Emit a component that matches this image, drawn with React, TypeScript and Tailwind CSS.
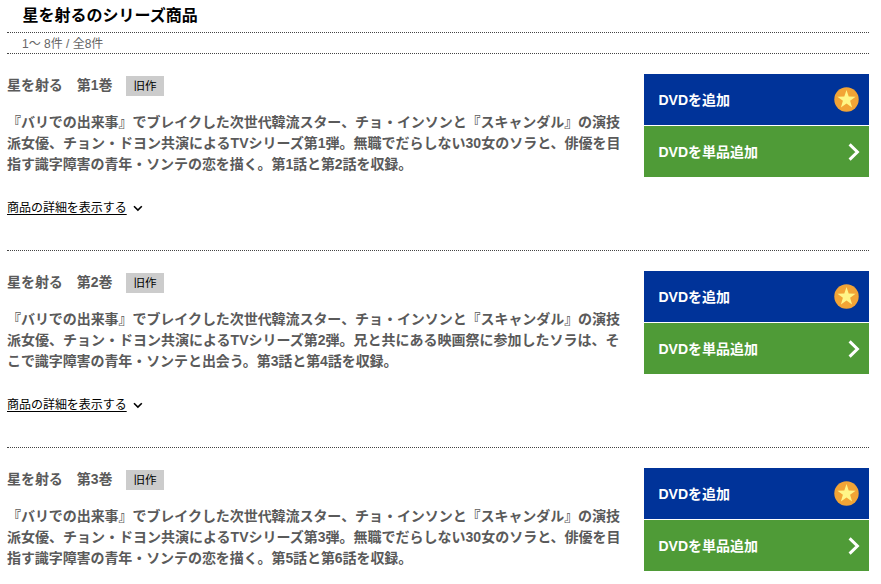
type Volume = {
  id: number;
  title: string;
  lines: string[];
  hasDetails: boolean;
};

const volumes: Volume[] = [
  {
    id: 1,
    title: "星を射る　第1巻",
    lines: [
      "『バリでの出来事』でブレイクした次世代韓流スター、チョ・インソンと『スキャンダル』の演技",
      "派女優、チョン・ドヨン共演によるTVシリーズ第1弾。無職でだらしない30女のソラと、俳優を目",
      "指す識字障害の青年・ソンテの恋を描く。第1話と第2話を収録。",
    ],
    hasDetails: true,
  },
  {
    id: 2,
    title: "星を射る　第2巻",
    lines: [
      "『バリでの出来事』でブレイクした次世代韓流スター、チョ・インソンと『スキャンダル』の演技",
      "派女優、チョン・ドヨン共演によるTVシリーズ第2弾。兄と共にある映画祭に参加したソラは、そ",
      "こで識字障害の青年・ソンテと出会う。第3話と第4話を収録。",
    ],
    hasDetails: true,
  },
  {
    id: 3,
    title: "星を射る　第3巻",
    lines: [
      "『バリでの出来事』でブレイクした次世代韓流スター、チョ・インソンと『スキャンダル』の演技",
      "派女優、チョン・ドヨン共演によるTVシリーズ第3弾。無職でだらしない30女のソラと、俳優を目",
      "指す識字障害の青年・ソンテの恋を描く。第5話と第6話を収録。",
    ],
    hasDetails: false,
  },
];

function StarBadge() {
  return (
    <svg width="25" height="25" viewBox="0 0 25 25">
      <circle cx="12.5" cy="12.5" r="12.2" fill="#f2a436" />
      <path d="M12.5 3.1l2.2 6.5 6.9.1-5.5 4.1 2 6.6-5.6-3.9-5.6 3.9 2-6.6-5.5-4.1 6.9-.1z" fill="#fff587" />
    </svg>
  );
}

function Chevron() {
  return (
    <svg width="12" height="18" viewBox="0 0 12 18" fill="none">
      <path d="M1.6 1.4L9.4 9l-7.8 7.6" stroke="#fff" strokeWidth="3" />
    </svg>
  );
}

function VolumeRow({ volume }: { volume: Volume }) {
  return (
    <li className="flex h-[197px] justify-between border-b border-dotted border-[#444] pt-5">
      <div>
        <div className="flex h-[22px] items-center">
          <h2 className="text-sm font-bold tracking-[-0.05px] text-[#5a5a5a]">{volume.title}</h2>
          <span className="ml-[13.5px] mt-[2px] flex h-5 w-[38px] items-center justify-center bg-[#ccc] pt-px text-[11.5px] text-black">旧作</span>
        </div>
        <p className="mt-4 text-sm leading-[21px] font-bold whitespace-nowrap text-[#5a5a5a]">
          {volume.lines.map((line) => (
            <span key={line} className="block first:tracking-[-0.06px] last:tracking-[-0.08px]">{line}</span>
          ))}
        </p>
        {volume.hasDetails && (
          <a href="#" className="mt-[23px] flex h-5 items-center text-xs text-black">
            <span className="tracking-[-0.03px] underline underline-offset-2 [text-decoration-skip-ink:none]">商品の詳細を表示する</span>
            <svg className="ml-[6px] mt-px" width="10" height="7" viewBox="0 0 10 7" fill="none">
              <path d="M1 1.2l3.9 3.9 3.9-3.9" stroke="#000" strokeWidth="1.6" />
            </svg>
          </a>
        )}
      </div>
      <div className="flex w-[225px] flex-col gap-px text-sm font-bold text-white">
        <button className="flex h-[51px] items-center justify-between bg-[#003399] pr-[10px] pl-[14.5px]">
          DVDを追加
          <StarBadge />
        </button>
        <button className="flex h-[51px] items-center justify-between bg-[#4f9b37] pr-[9px] pl-[14.5px]">
          DVDを単品追加
          <Chevron />
        </button>
      </div>
    </li>
  );
}

export default function App() {
  return (
    <main
      lang="ja"
      className="h-[584px] w-[881px] overflow-hidden bg-white pr-3 pl-[7px] font-['Liberation_Sans','Noto_Sans_CJK_JP',sans-serif] [text-spacing-trim:space-all]"
    >
      <h1 className="flex h-8 items-center pb-px pl-[15.5px] text-base font-bold text-black">星を射るのシリーズ商品</h1>
      <p className="flex h-[22px] items-center border-y border-dotted border-[#444] pt-[2px] pl-[15px] text-xs text-[#666]">
        1〜 8件 / 全8件
      </p>
      <ul>
        {volumes.map((volume) => (
          <VolumeRow key={volume.id} volume={volume} />
        ))}
      </ul>
    </main>
  );
}
